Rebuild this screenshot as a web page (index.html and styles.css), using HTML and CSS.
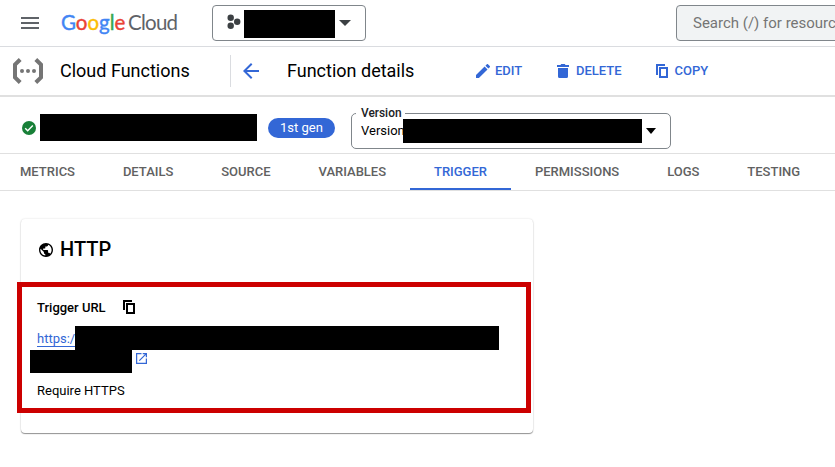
FILE: index.html
```
<!DOCTYPE html>
<html lang="en">
<head>
<meta charset="utf-8">
<title>Cloud Functions</title>
<link rel="stylesheet" href="styles.css">
</head>
<body>
<header class="topbar">
  <svg class="menu" width="18" height="12" viewBox="0 0 18 12"><path d="M0 0h18v2H0zM0 5h18v2H0zM0 10h18v2H0z"/></svg>
  <div class="logo"><span class="google"><span class="b">G</span><span class="r">o</span><span class="y">o</span><span class="b">g</span><span class="g">l</span><span class="r">e</span></span><span class="cloud">Cloud</span></div>
  <div class="project">
    <svg width="14" height="16" viewBox="0 0 14 16"><circle cx="3.7" cy="3.7" r="3.2"/><circle cx="10.2" cy="7.7" r="3.2"/><circle cx="3.7" cy="11.8" r="3.2"/></svg>
    <span class="redact project-name"></span>
    <span class="caret"></span>
  </div>
  <div class="search">Search (/) for resources</div>
</header>
<div class="toolbar">
  <svg class="product-icon" width="30" height="26" viewBox="0 0 30 26"><g fill="none" stroke="#757575" stroke-width="4"><path d="M7.2 1.5L2 6.7V19.3L7.2 24.5"/><path d="M22.8 1.5L28 6.7V19.3L22.8 24.5"/></g><g fill="#757575"><circle cx="9" cy="13" r="2"/><circle cx="15" cy="13" r="2"/><circle cx="21" cy="13" r="2"/></g></svg>
  <h1 class="product">Cloud Functions</h1>
  <div class="page-head">
    <svg class="back" width="16" height="16" viewBox="4 4 16 16"><path d="M20 11H7.83l5.59-5.59L12 4l-8 8 8 8 1.41-1.41L7.83 13H20v-2z"/></svg>
    <h2>Function details</h2>
  </div>
  <div class="action edit"><svg width="14" height="14" viewBox="3 3 18 18"><path d="M3 17.25V21h3.75L17.81 9.94l-3.75-3.75L3 17.25zM20.71 7.04a1 1 0 0 0 0-1.41l-2.34-2.34a1 1 0 0 0-1.41 0l-1.83 1.83 3.75 3.75 1.83-1.83z"/></svg>EDIT</div>
  <div class="action delete"><svg width="12" height="14" viewBox="0 0 12 14"><path d="M1 4h10v8.5a1.5 1.5 0 0 1-1.500 1.500h-7A1.500 1.500 0 0 1 1 12.500zM0 1h3.500l.7-1h3.600l.7 1H12v2H0z"/></svg>DELETE</div>
  <div class="action copy"><svg width="12" height="14" viewBox="0 0 12 14"><path d="M0 0h9v2H2v9H0zM3 3h9v11H3zM5 5v7h5V5z" fill-rule="evenodd"/></svg>COPY</div>
</div>
<div class="resource">
  <svg class="status" width="14" height="14" viewBox="0 0 14 14"><circle cx="7" cy="7" r="7" fill="#188038"/><path d="M3.200 7.200l2.500 2.500 5.100-5.200" fill="none" stroke="#fff" stroke-width="1.400"/></svg>
  <span class="redact resource-name"></span>
  <span class="chip">1st gen</span>
  <div class="version">
    <span class="version-label">Version</span>
    <span class="version-value">Version</span>
    <span class="redact version-name"></span>
    <span class="caret dark"></span>
  </div>
</div>
<nav class="tabs">
  <a>METRICS</a><a>DETAILS</a><a>SOURCE</a><a>VARIABLES</a><a class="active">TRIGGER</a><a>PERMISSIONS</a><a>LOGS</a><a>TESTING</a>
</nav>
<main>
  <section class="card">
    <div class="card-title">
      <svg width="14" height="14" viewBox="2 2 20 20"><path d="M12 2C6.480 2 2 6.480 2 12s4.480 10 10 10 10-4.480 10-10S17.520 2 12 2zm-1 17.930c-3.950-.49-7-3.850-7-7.930 0-.62.080-1.210.210-1.790L9 15v1c0 1.100.9 2 2 2v1.930zm6.900-2.540c-.26-.81-1-1.390-1.900-1.390h-1v-3c0-.55-.45-1-1-1H8v-2h2c.55 0 1-.45 1-1V7h2c1.100 0 2-.9 2-2v-.41c2.930 1.190 5 4.060 5 7.410 0 2.080-.8 3.970-2.100 5.390z"/></svg>
      <h3>HTTP</h3>
    </div>
    <div class="highlight">
      <div class="url-label">Trigger URL<svg width="12" height="14" viewBox="0 0 12 14"><path d="M0 0h9v2H2v8H0zM3 3h9v11H3zM5 5v7h5V5z" fill-rule="evenodd"/></svg></div>
      <div class="url"><a>https:/</a><span class="redact url-a"></span></div>
      <div class="url-end"><span class="redact url-b"></span><svg width="11" height="11" viewBox="3 3 18 18"><path d="M19 19H5V5h7V3H3v18h18v-9h-2v7zM14 3v2h3.590l-9.830 9.830 1.410 1.410L19 6.410V10h2V3h-7z"/></svg></div>
      <div class="https">Require HTTPS</div>
    </div>
  </section>
</main>
</body>
</html>
```
FILE: styles.css
```
* { box-sizing: border-box; }
body { margin: 0; width: 835px; height: 467px; overflow: hidden; background: #fff; color: #000; font-family: Roboto, sans-serif; font-size: 13px; white-space: nowrap; }
h1, h2, h3 { margin: 0; font-weight: 400; }
svg { display: block; flex: none; }
.redact { display: block; position: relative; background: #000; flex: none; }
.caret { width: 0; height: 0; border: 6px solid transparent; border-top-color: #3c4043; border-bottom: 0; }
.caret.dark { border-width: 6px 5px 0; border-top-color: #000; }

.topbar { display: flex; height: 47px; border-bottom: 1px solid #dadce0; overflow: hidden; }
.menu { margin: 17px 0 0 21px; fill: #5f6368; }
.logo { display: flex; flex: none; width: 151px; margin-left: 22px; font: 20.5px/44px Lato, sans-serif; }
.google { width: 67px; }
.google .b { color: #4285f4; }
.google .r { color: #ea4335; }
.google .y { color: #fbbc04; }
.google .g { color: #34a853; }
.google span { -webkit-text-stroke: .4px currentColor; }
.cloud { color: #5f6368; letter-spacing: -.75px; }
.project { display: flex; flex: none; align-items: center; width: 154px; height: 36px; margin-top: 5px; border: 1px solid #80868b; border-radius: 4px; padding-left: 14px; }
.project svg { fill: #3c4043; margin-top: -2px; }
.project-name { width: 91px; height: 28px; margin: 1px 4px 0 3px; }
.search { flex: none; width: 400px; height: 36px; margin: 5px 0 0 310px; padding-left: 16px; border: 1px solid #80868b; border-radius: 4px; background: #f1f3f4; color: #757575; font-size: 15px; line-height: 34px; }

.toolbar { display: flex; align-items: center; height: 50px; padding-bottom: 1px; border-bottom: 2px solid #e0e0e0; }
.product-icon { margin-left: 13px; }
.product { width: 170px; margin-left: 17px; font-size: 18px; }
.page-head { display: flex; align-items: center; width: 245px; height: 32px; border-left: 1px solid #dadce0; padding-left: 12px; }
.back { fill: #3367d6; margin-right: 28px; }
.page-head h2 { font-size: 18px; }
.action { display: flex; align-items: center; color: #3367d6; fill: #3367d6; font-weight: 500; }
.edit { width: 81px; margin-left: 1px; gap: 5px; }
.delete { width: 99px; gap: 7px; }
.copy { gap: 6.500px; }

.resource { display: flex; height: 57px; border-bottom: 1px solid #e0e0e0; }
.status { margin: 24px 0 0 22px; }
.resource-name { width: 216.500px; height: 27px; margin: 17px 0 0 4px; }
.chip { width: 67px; height: 20px; margin: 21px 0 0 11.500px; border-radius: 10px; background: #3367d6; color: #fff; line-height: 20px; text-align: center; }
.version { position: relative; display: flex; width: 320px; height: 36px; margin: 16px 0 0 16px; border: 1px solid #80868b; border-radius: 5px; padding-left: 9px; }
.version-label { position: absolute; left: 4px; top: -9px; width: 49px; padding-left: 5px; background: #fff; color: #202124; font-size: 11.900px; line-height: 16px; font-weight: 500; }
.version-value { width: 42px; line-height: 33px; }
.version-name { width: 239px; height: 24px; margin-top: 5px; }
.version .caret { margin: 14px 0 0 4px; }

.tabs { display: flex; height: 37px; border-bottom: 1px solid #e0e0e0; color: #616161; font-weight: 500; line-height: 35px; overflow: hidden; }
.tabs a { flex: none; padding: 0 23.900px 0 24px; height: 36px; }
.tabs a:first-child { margin-left: -4px; }
.tabs .active { color: #3367d6; border-bottom: 2px solid #3367d6; }

.card { width: 512px; height: 214px; margin: 28px 0 0 21px; border-radius: 4px; box-shadow: 0 1px 1px rgba(0,0,0,.4), 0 0 2px rgba(0,0,0,.15); }
.card-title { display: flex; align-items: center; height: 63px; padding: 0 0 3px 18px; gap: 7px; }
.card-title svg { margin-top: 2px; }
.card-title h3 { font-size: 20px; font-weight: 500; }
.highlight { width: 514px; height: 131px; margin-left: -4px; border: 5px solid #c00; padding: 13px 0 0 15px; }
.url-label { display: flex; align-items: center; gap: 17px; height: 15px; font-weight: 500; }
.url-label svg { margin-top: -2px; }
.url { display: flex; margin-top: 10.500px; height: 24.500px; }
.url a { width: 38px; height: 21px; color: #3367d6; line-height: 25px; border-bottom: 1px solid #3367d6; }
.url-a { width: 424px; height: 24.500px; }
.url-end { display: flex; margin-left: -7px; }
.url-b { width: 102px; height: 23px; }
.url-end svg { fill: #3367d6; margin: 3px 0 0 4px; }
.https { margin-top: 10px; line-height: 15px; }
```
